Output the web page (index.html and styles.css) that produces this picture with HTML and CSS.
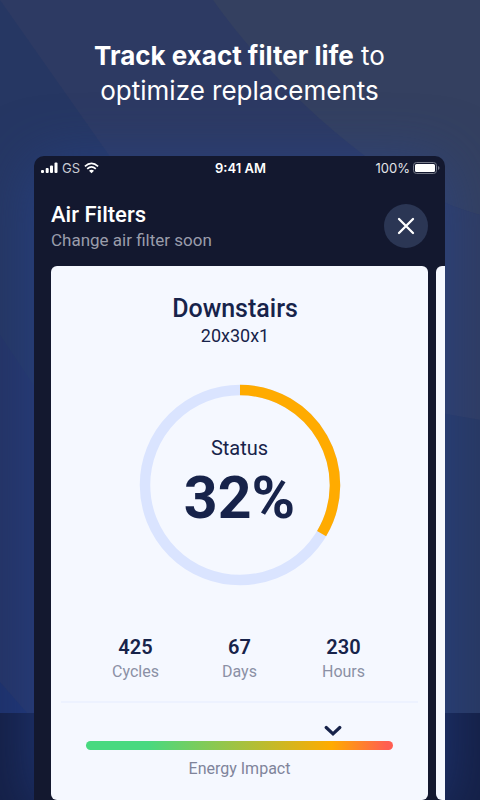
FILE: index.html
```html
<!DOCTYPE html>
<html lang="en">
<head>
<meta charset="utf-8">
<meta name="viewport" content="width=device-width, initial-scale=1">
<title>Air Filters</title>
<link rel="stylesheet" href="styles.css">
</head>
<body>
<svg class="backdrop" viewBox="0 0 480 800" preserveAspectRatio="none" aria-hidden="true">
  <rect width="480" height="800" fill="#2d3a63"/>
  <path d="M0 0L144 205L144 800H0Z" fill="#263763"/>
  <path d="M0 335L100 485V800L0 682Z" fill="#253465"/>
  <path d="M0 682L27 713H0Z" fill="#1e316a"/>
  <path d="M213 0C250 52 302 108 365 156C405 185 440 204 480 215V0Z" fill="#344060"/>
  <path d="M365 156C405 185 440 204 480 215V420L400 406Z" fill="#303d63"/>
  <path d="M400 406L480 420V713H400Z" fill="#293962"/>
  <rect y="713" width="480" height="87" fill="#152046"/>
</svg>
<main class="promo">
  <h1 class="headline"><strong>Track exact filter life</strong> to<br>optimize replacements</h1>
  <section class="phone">
    <div class="statusbar">
      <div class="signal">
        <svg width="17" height="12" viewBox="0 0 17 12" fill="#fff" aria-hidden="true"><rect x="0" y="8" width="3" height="3" rx="1"/><rect x="4.700" y="6" width="3" height="5" rx="1"/><rect x="9" y="3.500" width="3" height="7.500" rx="1"/><rect x="13.500" y="0.500" width="3" height="10.500" rx="1"/></svg>
        <span>GS</span>
        <svg width="15" height="12" viewBox="0 0 15 12" fill="none" stroke="#fff" stroke-width="1.700" aria-hidden="true"><path d="M0.900 4.300Q7.500-1.700 14.100 4.300M3.200 6.800Q7.500 3 11.800 6.800"/><path d="M5 8.700Q7.500 6.700 10 8.700L7.500 11.200Z" fill="#fff" stroke="none"/></svg>
      </div>
      <time class="clock">9:41 AM</time>
      <div class="battery">
        <span>100%</span>
        <svg width="27" height="12" viewBox="0 0 27 12" aria-hidden="true"><rect x="0.500" y="0.500" width="23" height="11" rx="3" fill="none" stroke="#747887"/><rect x="2" y="2" width="20" height="8" rx="1.500" fill="#fff"/><path d="M25 4Q26.500 4.500 26.500 6T25 8Z" fill="#747887"/></svg>
      </div>
    </div>
    <header class="header">
      <div>
        <h2 class="title">Air Filters</h2>
        <p class="subtitle">Change air filter soon</p>
      </div>
      <button class="close" type="button" aria-label="Close"><svg width="18" height="18" viewBox="0 0 18 18" fill="none" stroke="#fff" stroke-width="2.300" stroke-linecap="round"><path d="M2 2L16 16M16 2L2 16"/></svg></button>
    </header>
    <div class="slides">
      <article class="card">
        <div class="heading">
          <h3 class="room">Downstairs</h3>
          <p class="size">20x30x1</p>
        </div>
        <div class="gauge">
          <svg class="ring" viewBox="0 0 202 202" fill="none" stroke-width="10.500" aria-hidden="true"><circle cx="101" cy="101" r="95" stroke="#dae4ff"/><path d="M101 6A95 95 0 0 1 182.600 149.600" stroke="#ffab00"/></svg>
          <div class="reading"><span class="status">Status</span><strong class="percent">32%</strong></div>
        </div>
        <dl class="stats">
          <div class="stat"><dt>Cycles</dt><dd>425</dd></div>
          <div class="stat"><dt>Days</dt><dd>67</dd></div>
          <div class="stat"><dt>Hours</dt><dd>230</dd></div>
        </dl>
        <div class="impact">
          <div class="marker"><svg width="18" height="12" viewBox="0 0 18 12" fill="none" stroke="#17234a" stroke-width="3.200" stroke-linecap="round" aria-hidden="true"><path d="M2.200 2.500L9 8.800L15.800 2.500"/></svg></div>
          <div class="bar"></div>
          <p class="caption">Energy Impact</p>
        </div>
      </article>
      <article class="card"></article>
    </div>
  </section>
</main>
</body>
</html>
```
FILE: styles.css
```css
* { box-sizing: border-box; }
body { margin: 0; font-family: Roboto, "Liberation Sans", sans-serif; color: #17234a; background: #152046; }
h1, h2, h3, p, dl, dd { margin: 0; }
svg { display: block; }

.backdrop { position: absolute; inset: 0; width: 100%; height: 100%; }
.promo { position: relative; display: flex; flex-direction: column; height: 100vh; padding: 38px 35px 0 34px; overflow: hidden; }
.headline { font-family: Inter, sans-serif; font-size: 26px; line-height: 35px; font-weight: 400; text-align: center; color: #fff; white-space: nowrap; }
.headline strong { font-weight: 700; }

.phone { flex: 1; min-height: 0; display: flex; flex-direction: column; margin-top: 48px; border-radius: 10px 10px 0 0; overflow: hidden; background: #13182f; box-shadow: 0 8px 60px rgba(39, 70, 150, 0.6); }

.statusbar { display: grid; grid-template-columns: 1fr auto 1fr; align-items: center; height: 24px; padding: 0 5px 0 7px; font-family: Inter, sans-serif; font-size: 13px; color: #fff; }
.signal, .battery { display: flex; align-items: center; gap: 4px; color: #c9cbd2; }
.battery { justify-content: flex-end; color: #e3e4e8; gap: 3px; }
.clock { font-weight: 600; }

.header { display: flex; justify-content: space-between; align-items: center; padding: 21px 17px 15px; }
.title { font-size: 22px; line-height: 28px; font-weight: 500; color: #fff; }
.subtitle { font-size: 17px; line-height: 22px; color: #9a9dab; }
.close { display: grid; place-items: center; width: 44px; height: 44px; padding: 0; border: 0; border-radius: 50%; background: #2b3654; }

.slides { flex: 1; min-height: 0; display: flex; gap: 8px; padding-left: 17px; }
.card { flex: 0 0 calc(100% - 17px); min-height: 534px; padding: 28px 10px 0; border-radius: 6px; background: #f5f8ff; }
.heading { padding-right: 9px; text-align: center; }
.room { font-size: 25px; line-height: 30px; font-weight: 500; }
.size { font-size: 18px; line-height: 24px; }

.gauge { display: grid; justify-content: center; margin-top: 36px; }
.ring { grid-area: 1 / 1; width: 202px; height: 202px; }
.reading { grid-area: 1 / 1; display: flex; flex-direction: column; align-items: center; padding-top: 52px; }
.status { font-size: 20px; line-height: 24px; }
.percent { font-size: 59px; line-height: 76px; font-weight: 700; }

.stats { display: grid; grid-template-columns: repeat(3, 104px); justify-content: center; margin-top: 48px; padding-bottom: 18px; border-bottom: 2px solid #edf2ff; }
.stat { display: flex; flex-direction: column-reverse; align-items: center; }
.stat dt { font-size: 16px; line-height: 23px; color: #8b90a5; }
.stat dd { font-size: 20px; line-height: 26px; font-weight: 600; }

.impact { padding: 22px 25px 0; }
.marker { display: flex; justify-content: center; width: 161%; margin-bottom: 4px; }
.bar { height: 9px; border-radius: 5px; background: linear-gradient(90deg, #48d980 20%, #ffab00 80%, #ff5e52 98%); }
.caption { margin-top: 8px; font-size: 16px; line-height: 22px; text-align: center; color: #7f849b; }
```
